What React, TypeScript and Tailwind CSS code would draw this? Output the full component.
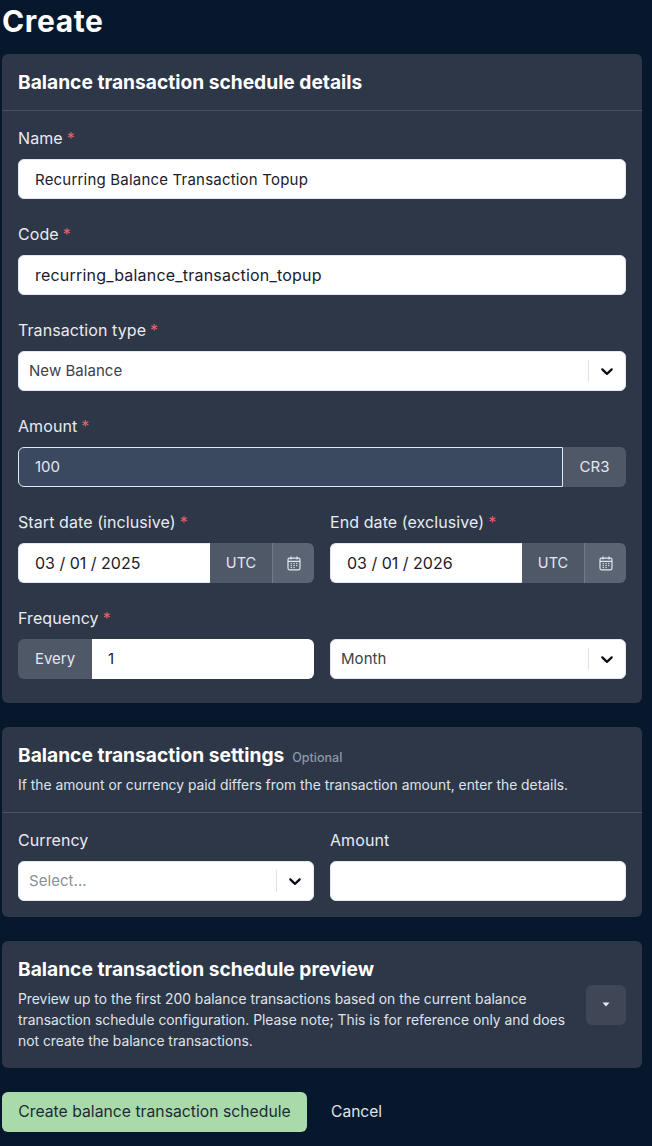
import React from "react";

const Req = () => <span className="text-[#e5626b] ml-1">*</span>;

function Label({ children, req }: { children: React.ReactNode; req?: boolean }) {
  return (
    <div className="h-6 mb-2 text-[16px] leading-[22px] tracking-[0.08px] text-[#e8ebf0]">
      {children}
      {req && <Req />}
    </div>
  );
}

function Chevron() {
  return (
    <svg width="20" height="20" viewBox="0 0 20 20" fill="#0a0f1a">
      <path d="M4.516 7.548c.436-.446 1.043-.481 1.576 0L10 11.295l3.908-3.747c.533-.481 1.141-.446 1.574 0 .436.445.408 1.197 0 1.615-.406.418-4.695 4.502-4.695 4.502a1.095 1.095 0 0 1-1.576 0S4.924 9.581 4.516 9.163c-.409-.418-.436-1.17 0-1.615z" />
    </svg>
  );
}

function SelectBox({ value, placeholder }: { value?: string; placeholder?: string }) {
  return (
    <div className="h-10 w-full flex items-center bg-white rounded-md border border-[#e2e8f0]">
      <span className={`flex-1 pl-[10px] text-[15px] tracking-[0.05px] ${placeholder ? "text-[#8b8f96]" : "text-[#3d4148]"}`}>
        {value || placeholder}
      </span>
      <span className="w-px h-[22px] bg-[#dde3ea]" />
      <span className="w-[36px] flex justify-center items-center">
        <Chevron />
      </span>
    </div>
  );
}

function TextBox({ value, code }: { value: string; code?: boolean }) {
  return (
    <div
      className={`h-10 w-full flex items-center bg-white rounded-md border border-[#e2e8f0] px-4 text-[#1a202c] ${
        code ? "text-[16px] tracking-[0.2px]" : "pt-[2px] text-[15px] tracking-[0.2px]"
      }`}
    >
      {value}
    </div>
  );
}

function CalendarIcon() {
  return (
    <svg width="14" height="15" viewBox="0 0 14 15" fill="none" stroke="#e2e8f0" strokeWidth="1.2">
      <rect x="1" y="2.2" width="12" height="11.6" rx="1.5" />
      <path d="M1 5.4h12M4 .6v3M10 .6v3" />
      <path d="M3.6 7.6h1.4M6.3 7.6h1.4M9 7.6h1.4M3.6 9.6h1.4M6.3 9.6h1.4M9 9.6h1.4M3.6 11.6h1.4M6.3 11.6h1.4" strokeWidth="1" />
    </svg>
  );
}

function DateBox({ value }: { value: string }) {
  return (
    <div className="h-10 w-full flex items-stretch">
      <div className="flex-1 flex items-center bg-white rounded-l-md border border-r-0 border-[#e2e8f0] pl-4 text-[16px] text-[#1a202c]">
        {value}
      </div>
      <div className="w-[62px] flex items-center justify-center bg-[#4f5867] text-[14.5px] text-[#e2e8f0]">UTC</div>
      <div className="w-[42px] flex items-center justify-center bg-[#5b6472] rounded-r-md border-l border-[#737b88]">
        <CalendarIcon />
      </div>
    </div>
  );
}

export default function App() {
  return (
    <div className="min-h-[1146px] bg-[#07182d] pl-[2px] pr-[10px] font-['Inter',sans-serif]">
      <h1 className="h-[54px] pt-[2px] text-[30px] leading-[38px] font-bold tracking-[0.6px] text-white">Create</h1>

      <section className="bg-[#2d3748] rounded-md">
        <div className="h-[57px] px-4 flex items-center border-b border-[#4a5261]">
          <h2 className="text-[19.2px] font-bold text-white">Balance transaction schedule details</h2>
        </div>
        <div className="px-4 pt-4 pb-6 flex flex-col gap-6">
          <div>
            <Label req>Name</Label>
            <TextBox value="Recurring Balance Transaction Topup" />
          </div>
          <div>
            <Label req>Code</Label>
            <TextBox code value="recurring_balance_transaction_topup" />
          </div>
          <div>
            <Label req>Transaction type</Label>
            <SelectBox value="New Balance" />
          </div>
          <div>
            <Label req>Amount</Label>
            <div className="h-10 flex items-stretch">
              <div className="flex-1 flex items-center bg-[#3a4960] border border-[#e2e8f0] rounded-l-md pl-4 text-[15px] text-[#e2e8f0]">
                100
              </div>
              <div className="w-[63px] flex items-center justify-center bg-[#4f5867] rounded-r-md text-[15px] text-[#e2e8f0]">
                CR3
              </div>
            </div>
          </div>
          <div className="grid grid-cols-2 gap-4">
            <div>
              <Label req>Start date (inclusive)</Label>
              <DateBox value="03 / 01 / 2025" />
            </div>
            <div>
              <Label req>End date (exclusive)</Label>
              <DateBox value="03 / 01 / 2026" />
            </div>
          </div>
          <div>
            <Label req>Frequency</Label>
            <div className="grid grid-cols-2 gap-4">
              <div className="h-10 flex items-stretch">
                <div className="w-[74px] flex items-center justify-center bg-[#4f5867] rounded-l-md text-[15px] text-[#e2e8f0]">
                  Every
                </div>
                <div className="flex-1 flex items-center bg-white rounded-r-md pl-4 text-[15px] text-[#1a202c]">1</div>
              </div>
              <SelectBox value="Month" />
            </div>
          </div>
        </div>
      </section>

      <section className="mt-6 bg-[#2d3748] rounded-md">
        <div className="h-[86px] px-4 pt-[15px] border-b border-[#4a5261]">
          <div className="flex items-baseline h-[27px]">
            <h2 className="text-[19.2px] font-bold text-white leading-[27px]">Balance transaction settings</h2>
            <span className="ml-2 text-[12.5px] font-medium text-[#8d97a8]">Optional</span>
          </div>
          <p className="mt-[6px] text-[13.85px] leading-5 text-[#dfe3e9]">
            If the amount or currency paid differs from the transaction amount, enter the details.
          </p>
        </div>
        <div className="px-4 pt-4 pb-4 grid grid-cols-2 gap-4">
          <div>
            <Label>Currency</Label>
            <SelectBox placeholder="Select..." />
          </div>
          <div>
            <Label>Amount</Label>
            <div className="h-10 bg-white rounded-md border border-[#e2e8f0]" />
          </div>
        </div>
      </section>

      <section className="mt-6 h-[127px] bg-[#2d3748] rounded-md pl-4 pr-4 flex items-center">
        <div className="flex-1 pr-[16px]">
          <h2 className="text-[19.2px] font-bold text-white leading-[27px] -mt-[2px]">Balance transaction schedule preview</h2>
          <p className="mt-[6px] text-[13.85px] leading-[21px] text-[#dfe3e9]">
            Preview up to the first 200 balance transactions based on the current balance transaction schedule
            configuration. Please note; This is for reference only and does not create the balance transactions.
          </p>
        </div>
        <button className="w-10 h-10 shrink-0 rounded-md bg-[#3f4757] flex items-center justify-center">
          <svg width="8" height="5" viewBox="0 0 8 5" fill="#e8ebf0">
            <path d="M0.5 0.5h7L4 4.5z" />
          </svg>
        </button>
      </section>

      <div className="mt-6 flex items-center">
        <button className="h-10 w-[305px] rounded-md bg-[#a9dbaa] text-[15.75px] text-[#1f2937]">
          Create balance transaction schedule
        </button>
        <button className="ml-6 text-[15.6px] text-[#dfe3e9]">Cancel</button>
      </div>
    </div>
  );
}
